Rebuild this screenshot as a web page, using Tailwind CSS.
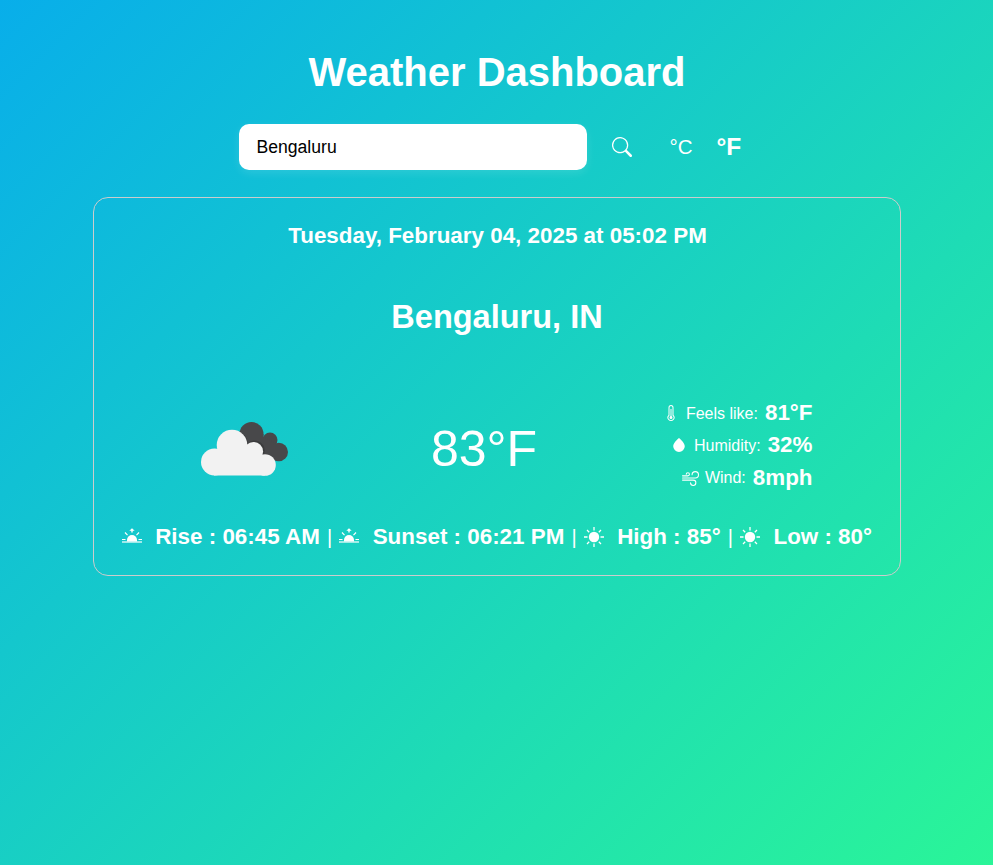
<!DOCTYPE html>
<html lang="en">
<head>
<meta charset="utf-8">
<title>Weather Dashboard</title>
<script src="https://cdn.jsdelivr.net/npm/@tailwindcss/browser@4"></script>
</head>
<body class="min-h-screen bg-[linear-gradient(135deg,#08aeea_0%,#2af598_100%)] font-['Liberation_Sans',Arial,sans-serif] text-white">
<svg class="hidden" xmlns="http://www.w3.org/2000/svg">
  <symbol id="sunrise" viewBox="0 0 20 20" fill="none" stroke="currentColor">
    <path d="M10 1.200l2.700 2.500h-2v1.900h-1.400V3.700h-2z" fill="currentColor" stroke="none"/>
    <path d="M3 5.500l2.500 2.600M17 5.500l-2.500 2.600M0 12.500h3.500M16.500 12.500H20" stroke-width="1.200"/>
    <path d="M5 14.500v-1.500a5 5 0 0 1 10 0v1.500z" fill="currentColor" stroke="none"/>
    <path d="M0 15h20" stroke-width="1.200"/>
  </symbol>
  <symbol id="sun" viewBox="0 0 20 20" fill="none" stroke="currentColor">
    <circle cx="10" cy="10" r="5.200" fill="currentColor" stroke="none"/>
    <path d="M10 0v3.500M10 16.500V20M0 10h3.500M16.500 10H20M3 3l2.200 2.200M14.800 14.800L17 17M17 3l-2.200 2.200M5.200 14.800L3 17" stroke-width="1.300"/>
  </symbol>
</svg>
<main class="mx-auto flex w-[808px] flex-col items-center pt-12">
  <h1 class="h-12 pl-px text-[40px] leading-[48px] font-bold">Weather Dashboard</h1>
  <div class="mt-7 flex h-[46px] w-[516px] items-center">
    <input value="Bengaluru" class="h-[46px] w-[348px] rounded-[10px] bg-white px-[18px] text-[17.600px] text-black shadow-[0_3px_10px_rgba(255,255,255,0.12)]">
    <svg class="ml-[25px] size-5" viewBox="0 0 16 16" fill="currentColor"><path d="M11.742 10.344a6.500 6.500 0 1 0-1.397 1.398h-.001q.044.060.098.115l3.850 3.850a1 1 0 0 0 1.415-1.414l-3.850-3.850a1 1 0 0 0-.115-.1zM12 6.500a5.500 5.500 0 1 1-11 0 5.500 5.500 0 0 1 11 0"/></svg>
    <span class="ml-[38px] text-[20.500px]">°C</span>
    <span class="ml-6 text-[24.500px] font-bold">°F</span>
  </div>
  <section class="mt-[27px] flex h-[379px] w-[808px] flex-col items-center rounded-[15px] border border-[#ccc]">
    <p class="mt-[25px] h-[26px] pl-0.5 text-[22.400px] leading-[26px] font-bold">Tuesday, February 04, 2025 at 05:02 PM</p>
    <h2 class="mt-[49px] h-[38px] pl-px text-[32.500px] leading-[38px] font-bold">Bengaluru, IN</h2>
    <div class="mt-[60px] flex h-[98px] w-[612px] items-center justify-between pl-px">
      <svg class="mt-[7px] ml-[9px] h-[54px] w-[88px] shrink-0" viewBox="0 0 88 54">
        <g fill="#48484a"><circle cx="50.500" cy="12" r="12"/><circle cx="69" cy="18" r="7.500"/><circle cx="77.800" cy="30" r="9.200"/><path d="M42 12h20.500v3l12 6v17.500H60z"/></g>
        <path d="M38 9a16.500 16.500 0 0 1 9 12a10 10 0 0 1 16 11a11 11 0 0 1 11 7l-8 4-18-10z" fill="#222" opacity=".3"/>
        <g fill="#f2f2f2"><circle cx="13.500" cy="40" r="13.500"/><circle cx="31" cy="23" r="15.300"/><circle cx="52.500" cy="29.500" r="9.600"/><circle cx="64" cy="43" r="10.800"/><path d="M13 53.500V36l20-9h22l9 16v10.500z"/></g>
      </svg>
      <p class="mt-2 ml-[37px] text-[50px]">83°F</p>
      <div class="-mr-[10px] flex w-[170px] flex-col items-end">
        <div class="flex h-[32.500px] items-center"><svg class="mr-[7px] size-4" viewBox="0 0 16 16" fill="currentColor"><path d="M8 14a1.500 1.500 0 1 0 0-3 1.500 1.500 0 0 0 0 3"/><path d="M8 0a2.500 2.500 0 0 0-2.500 2.500v7.550a3.500 3.500 0 1 0 5 0V2.500A2.500 2.500 0 0 0 8 0M6.500 2.500a1.500 1.500 0 1 1 3 0v7.987l.167.150a2.500 2.500 0 1 1-3.333 0l.166-.15z"/><path d="M7.500 4h1v8h-1z"/></svg><span class="mt-[2px] mr-[7px] text-base">Feels like:</span><b class="text-[22.400px]">81°F</b></div>
        <div class="flex h-[32.500px] items-center"><svg class="mr-2 h-3.5 w-3.5" viewBox="0 0 16 16" fill="currentColor"><path d="M8 16a6.600 6.600 0 0 0 6.600-6.600C14.600 5.500 9.500 1.500 8 0 6.500 1.500 1.400 5.500 1.400 9.400A6.600 6.600 0 0 0 8 16"/></svg><span class="mt-px mr-[7px] text-base">Humidity:</span><b class="text-[22.400px]">32%</b></div>
        <div class="flex h-[32.500px] items-center"><svg class="mt-px mr-[6px] size-[17px]" viewBox="0 0 16 16" fill="currentColor"><path d="M12.500 2A2.500 2.500 0 0 0 10 4.500a.5.5 0 0 1-1 0A3.500 3.500 0 1 1 12.500 8H.5a.5.5 0 0 1 0-1h12a2.500 2.500 0 0 0 0-5m-7 1a1 1 0 0 0-1 1 .5.5 0 0 1-1 0 2 2 0 1 1 2 2h-5a.5.5 0 0 1 0-1h5a1 1 0 0 0 0-2M0 9.500A.5.5 0 0 1 .5 9h10.042a3 3 0 1 1-3 3 .5.5 0 0 1 1 0 2 2 0 1 0 2-2H.5a.5.5 0 0 1-.5-.5"/></svg><span class="mt-px mr-[7px] text-base">Wind:</span><b class="text-[22.400px]">8mph</b></div>
      </div>
    </div>
    <div class="mt-[30px] flex h-[26px] w-[751px] items-center justify-between pl-px text-[22.400px] leading-[26px] whitespace-nowrap">
      <svg class="size-5"><use href="#sunrise"/></svg><b class="ml-1.5">Rise : 06:45 AM</b><span class="text-[20px]">|</span>
      <svg class="size-5"><use href="#sunrise"/></svg><b class="ml-1.5">Sunset : 06:21 PM</b><span class="text-[20px]">|</span>
      <svg class="size-5"><use href="#sun"/></svg><b class="ml-1.5">High : 85°</b><span class="text-[20px]">|</span>
      <svg class="size-5"><use href="#sun"/></svg><b class="ml-1.5">Low : 80°</b>
    </div>
  </section>
</main>
</body>
</html>
